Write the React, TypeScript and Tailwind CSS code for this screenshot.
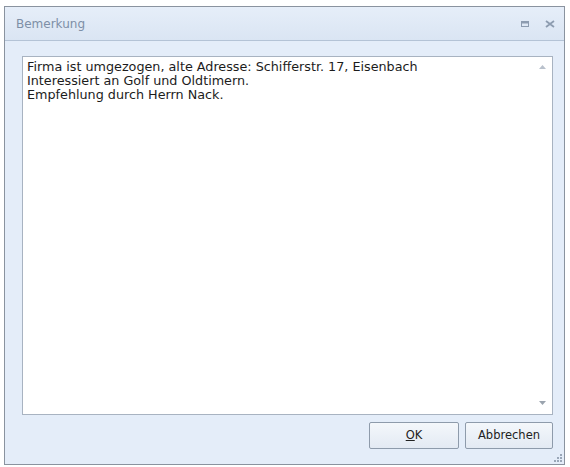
import React from "react";

export default function App() {
  const font = { fontFamily: '"DejaVu Sans", Tahoma, sans-serif' };
  return (
    <div className="w-[570px] h-[467px] bg-white pt-[6px] pl-[4px] pr-[5px] pb-[2px]" style={font}>
      <div className="w-full h-full flex flex-col border border-[#8a939f] bg-[#e4edf9]">
        <div className="h-[34px] shrink-0 flex items-center justify-between pl-[11px] pr-[6px] bg-gradient-to-b from-[#e6eef9] to-[#dae5f3] border-b border-[#b4c3d6]">
          <span className="text-[12px] text-[#7d8fa6]">Bemerkung</span>
          <div className="flex items-center gap-[16px] pr-[3px]">
            <svg width="8" height="6" viewBox="0 0 8 6">
              <rect x="0.5" y="0.5" width="7" height="5" fill="none" stroke="#8d9cb0" />
              <rect x="0" y="0" width="8" height="2.5" fill="#8d9cb0" />
            </svg>
            <svg width="10" height="8" viewBox="0 0 10 8">
              <path d="M1 1 L9 7 M9 1 L1 7" stroke="#8d9cb0" strokeWidth="1.8" />
            </svg>
          </div>
        </div>
        <div className="flex-1 flex flex-col pl-[17px] pr-[11px] pt-[15px]">
          <div className="relative h-[359px] bg-white border border-[#a8b3c1] pl-[4px] pt-[3px] text-[12.75px] leading-[14px] text-[#1c1c1c]">
            <div>Firma ist umgezogen, alte Adresse: Schifferstr. 17, Eisenbach</div>
            <div>Interessiert an Golf und Oldtimern.</div>
            <div>Empfehlung durch Herrn Nack.</div>
            <div className="absolute right-[6px] top-[8px]">
              <svg width="7" height="4" viewBox="0 0 7 4"><path d="M0 4 L3.5 0 L7 4Z" fill="#b9c1cc" /></svg>
            </div>
            <div className="absolute right-[6px] bottom-[9px]">
              <svg width="7" height="4" viewBox="0 0 7 4"><path d="M0 0 L3.5 4 L7 0Z" fill="#9aa3ae" /></svg>
            </div>
          </div>
          <div className="flex justify-end gap-[6px] mt-[7px]">
            <button className="w-[90px] h-[27px] border border-[#8e9bab] rounded-[2px] bg-gradient-to-b from-[#f4f7fb] to-[#e3eaf3] text-[11.5px] text-[#222]">
              <span className="underline">O</span>K
            </button>
            <button className="w-[88px] h-[27px] border border-[#8e9bab] rounded-[2px] bg-gradient-to-b from-[#f4f7fb] to-[#e3eaf3] text-[11.5px] text-[#222]">
              Abbrechen
            </button>
          </div>
          <div className="flex-1 flex justify-end items-end pb-[2px] -mr-[9px]">
            <svg width="8" height="8" viewBox="0 0 8 8" fill="#9aa7b8">
              <rect x="6" y="0" width="2" height="2" />
              <rect x="3" y="3" width="2" height="2" />
              <rect x="6" y="3" width="2" height="2" />
              <rect x="0" y="6" width="2" height="2" />
              <rect x="3" y="6" width="2" height="2" />
              <rect x="6" y="6" width="2" height="2" />
            </svg>
          </div>
        </div>
      </div>
    </div>
  );
}
